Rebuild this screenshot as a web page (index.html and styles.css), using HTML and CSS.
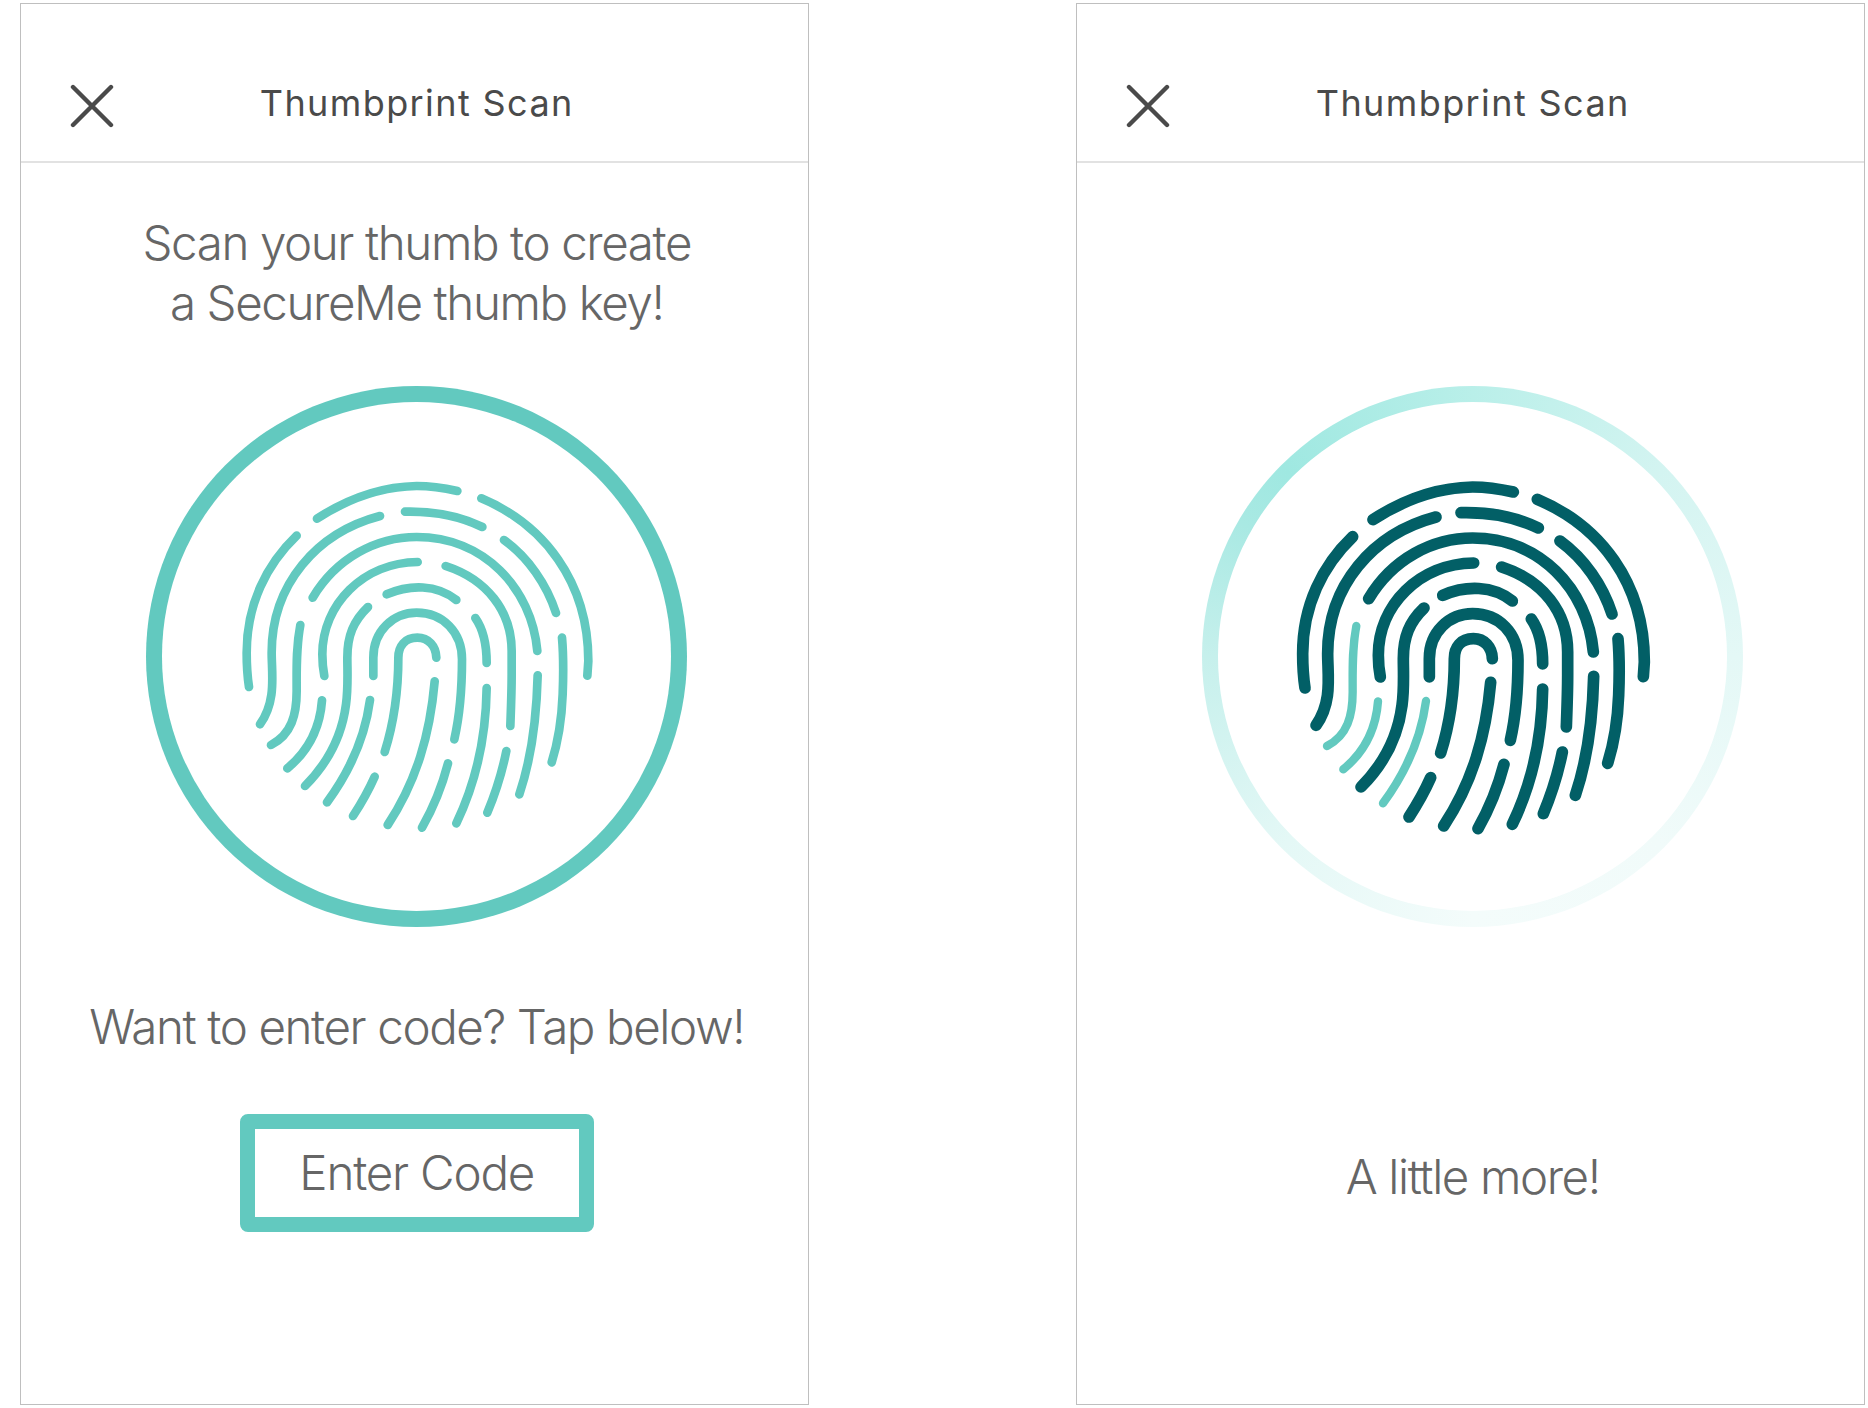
FILE: index.html
```html
<!DOCTYPE html>
<html lang="en">
<head>
  <meta charset="UTF-8">
  <meta name="viewport" content="width=device-width, initial-scale=1.0">
  <title>Thumbprint Scan</title>
  <link rel="stylesheet" href="styles.css">
</head>
<body>
  <svg class="sprites" width="0" height="0" aria-hidden="true">
    <defs>
      <g id="print-main">
        <path d="M291 173C380 115 480 77 590 75C632 75 672 81 712 90"/>
        <path d="M784 112C970 190 1105 360 1105 600L1102 644"/>
        <path d="M480 165C290 215 155 370 155 575C155 640 170 720 120 790"/>
        <path d="M230 224C140 310 80 430 80 575C80 610 82 645 87 678"/>
        <path d="M555 152C640 150 720 165 787 198"/>
        <path d="M852 237C925 290 980 370 1008 456"/>
        <path d="M278 410C350 290 470 228 590 228C790 228 935 380 952 570"/>
        <path d="M593 303C430 305 307 430 307 580C307 605 309 625 313 645"/>
        <path d="M677 315C800 355 875 450 875 570L875 640C875 690 873 740 871 795"/>
        <path d="M500 400C570 370 650 370 709 417"/>
        <path d="M444 438C400 480 382 525 382 590C382 630 385 680 378 730C365 830 320 910 255 975"/>
        <path d="M460 645L460 590C460 510 520 455 590 455C670 455 726 515 726 595C726 680 720 760 703 835"/>
        <path d="M494 873C520 790 535 700 535 590C535 555 555 530 592 530C625 530 648 555 649 590"/>
        <path d="M766 471C790 505 800 545 800 606"/>
        <path d="M644 661C630 820 590 960 503 1092"/>
        <path d="M800 681C798 830 770 960 709 1087"/>
        <path d="M953 643C950 770 935 890 898 1000"/>
        <path d="M1026 530C1032 600 1030 650 1028 700C1025 780 1015 840 995 904"/>
        <path d="M859 870C845 940 825 1000 802 1055"/>
        <path d="M684 907C665 980 640 1040 606 1100"/>
        <path d="M464 947C445 990 425 1025 399 1065"/>
      </g>
      <g id="print-scanned">
        <path d="M450 717C435 830 390 930 321 1024"/>
        <path d="M306 718C300 800 265 870 202 922"/>
        <path d="M241 492C228 560 230 620 230 690C230 760 215 820 153 852"/>
      </g>
    </defs>
  </svg>

  <main class="screens">
    <section class="screen">
      <header class="top-bar">
        <svg class="close-icon" viewBox="0 0 44 44"><path d="M3 3L41 41M41 3L3 41"/></svg>
        <h1 class="top-title">Thumbprint Scan</h1>
      </header>
      <div class="screen-body">
        <p class="message">Scan your thumb to create<br>a SecureMe thumb key!</p>
        <div class="ring ring-solid">
          <div class="ring-inner">
            <svg class="print" viewBox="-9 0 1200 1170">
              <use href="#print-main"/>
              <use href="#print-scanned"/>
            </svg>
          </div>
        </div>
        <p class="message tap-hint">Want to enter code? Tap below!</p>
        <button class="code-button">Enter Code</button>
      </div>
    </section>

    <section class="screen">
      <header class="top-bar">
        <svg class="close-icon" viewBox="0 0 44 44"><path d="M3 3L41 41M41 3L3 41"/></svg>
        <h1 class="top-title">Thumbprint Scan</h1>
      </header>
      <div class="screen-body screen-body-scanning">
        <div class="ring ring-fading">
          <div class="ring-inner">
            <svg class="print print-active" viewBox="-9 0 1200 1170">
              <use href="#print-main"/>
              <use class="print-done" href="#print-scanned"/>
            </svg>
          </div>
        </div>
        <p class="message progress-text">A little more!</p>
      </div>
    </section>
  </main>
</body>
</html>
```

FILE: styles.css
```css
body { margin: 0; background: #fff; font-family: Inter, "Liberation Sans", sans-serif; color: #666; }
.sprites { display: block; height: 0; }

.screens { display: flex; gap: 266.5px; padding: 3px 0 0 19.5px; }
.screen { width: 789.5px; height: 1401.5px; box-sizing: border-box; border: 1.5px solid #bfbfbf; }

.top-bar {
  display: grid;
  grid-template-columns: 1fr auto 1fr;
  align-items: center;
  height: 157px;
  padding: 0 0 0 5px;
  border-bottom: 2px solid #e2e2e2;
}
.close-icon { width: 44px; height: 44px; margin: 46px 0 0 44px; fill: none; stroke: #4a4a4a; stroke-width: 4.4; stroke-linecap: round; }
.top-title { margin: 41px 0 0; font-size: 36px; font-weight: 400; letter-spacing: 1.4px; color: #4a4a4a; }

.screen-body { display: flex; flex-direction: column; align-items: center; padding: 49.5px 0 0 5px; }
.screen-body-scanning { padding-top: 223px; }

.message { margin: 0; font-size: 47.5px; font-weight: 300; line-height: 60px; letter-spacing: -1.4px; text-align: center; }
.tap-hint { margin-top: 70.5px; }
.progress-text { margin-top: 220px; }

.ring { width: 541px; height: 541px; box-sizing: border-box; padding: 16px; border-radius: 50%; margin-top: 53px; }
.screen-body-scanning .ring { margin-top: 0; }
.ring-solid { background: #62c9bf; }
.ring-fading {
  background: conic-gradient(from 315deg, #9fe8e1, #b9efe9 45deg, #d3f4f1 90deg, #e4f8f6 135deg, #f1fbfa 180deg, #f4fcfb 225deg, #e4f8f6 270deg, #c6f0ec 315deg, #a9e9e3 345deg, #9fe8e1);
}
.ring-inner { display: flex; align-items: center; justify-content: center; height: 100%; border-radius: 50%; background: #fff; }

.print { width: 400px; height: 390px; fill: none; stroke: #62c9bf; stroke-width: 26; stroke-linecap: round; }
.print-active { stroke: #025f66; stroke-width: 35; }
.print-done { stroke: #62c9bf; stroke-width: 25; }

.code-button {
  width: 354px;
  height: 118px;
  margin-top: 57px;
  padding: 0 0 2px;
  border: 15px solid #62c9bf;
  border-radius: 8px;
  background: #fff;
  font-family: inherit;
  font-size: 47.5px;
  font-weight: 300;
  letter-spacing: -1.2px;
  color: #666;
}
```
